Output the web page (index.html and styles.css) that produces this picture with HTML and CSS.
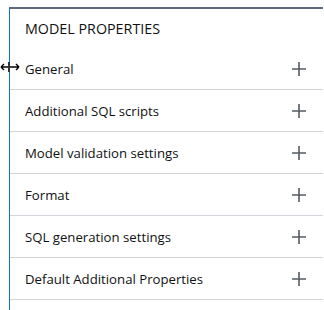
FILE: index.html
```html
<!DOCTYPE html>
<html>
<head>
<meta charset="utf-8">
<link rel="stylesheet" href="styles.css">
</head>
<body>
<div class="panel">
  <div class="title">MODEL PROPERTIES</div>
  <div class="row"><span>General</span><svg class="plus" viewBox="0 0 14 14"><path d="M7 0V14M0 7H14"/></svg></div>
  <div class="row"><span>Additional SQL scripts</span><svg class="plus" viewBox="0 0 14 14"><path d="M7 0V14M0 7H14"/></svg></div>
  <div class="row"><span>Model validation settings</span><svg class="plus" viewBox="0 0 14 14"><path d="M7 0V14M0 7H14"/></svg></div>
  <div class="row"><span>Format</span><svg class="plus" viewBox="0 0 14 14"><path d="M7 0V14M0 7H14"/></svg></div>
  <div class="row"><span>SQL generation settings</span><svg class="plus" viewBox="0 0 14 14"><path d="M7 0V14M0 7H14"/></svg></div>
  <div class="row"><span>Default Additional Properties</span><svg class="plus" viewBox="0 0 14 14"><path d="M7 0V14M0 7H14"/></svg></div>
</div>
<svg class="cursor" viewBox="0 0 20 12"><path d="M1 6H19M1 6L4 3M1 6L4 9M19 6L16 3M19 6L16 9" /><path d="M9 1V11" class="bar"/></svg>
</body>
</html>
```
FILE: styles.css
```css
html, body { margin: 0; padding: 0; background: #fff; }
body { width: 324px; height: 310px; overflow: hidden; position: relative; font-family: "Open Sans", "Noto Sans", sans-serif; color: #0f1111; }
.panel {
  margin-left: 9px;
  margin-top: 7px;
  width: 314px;
  height: 303px;
  box-sizing: border-box;
  border-top: 2px solid #5f6b7a;
  border-left: 1px solid #0972d3;
}
.title {
  height: 39px;
  padding-left: 15px;
  display: flex;
  align-items: center;
  font-size: 14.3px;
  font-weight: 500;
}
.row {
  height: 41px;
  border-bottom: 1px solid #d1d5db;
  display: flex;
  align-items: center;
  justify-content: space-between;
  padding-left: 15px;
  padding-right: 17px;
  font-size: 13.2px;
  font-weight: 500;
}
.plus { width: 14px; height: 14px; }
.plus path { stroke: #545b64; stroke-width: 1.6; fill: none; }
.cursor { position: absolute; left: 0; top: 61px; width: 20px; height: 12px; }
.cursor path { stroke: #000; stroke-width: 1.4; fill: none; }
.cursor .bar { stroke: #333; stroke-width: 2; }
```
